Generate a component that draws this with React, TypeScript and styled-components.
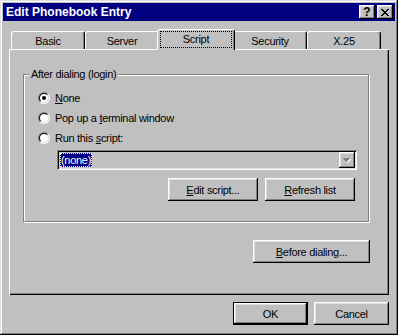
import React from 'react';
import styled, { createGlobalStyle, css } from 'styled-components';

const Global = createGlobalStyle`
  html, body { margin: 0; padding: 0; background: #c0c0c0; }
  body { font-family: "Liberation Sans", Arial, sans-serif; font-size: 11px; letter-spacing: -0.3px; color: #000; }
  * { box-sizing: border-box; }
`;

const raised = css`
  box-shadow: inset -1px -1px #000, inset 1px 1px #fff, inset -2px -2px #808080, inset 2px 2px #dfdfdf;
`;

const Window = styled.div`
  width: 398px;
  height: 335px;
  padding: 3px;
  background: #c0c0c0;
  box-shadow: inset -1px -1px #000, inset 1px 1px #dfdfdf, inset -2px -2px #808080, inset 2px 2px #fff;
  display: flex;
  flex-direction: column;
`;

const TitleBar = styled.div`
  height: 18px;
  background: #000080;
  display: flex;
  align-items: center;
  padding: 0 2px 0 3px;
`;

const Title = styled.div`
  flex: 1;
  color: #fff;
  font-weight: bold;
  font-size: 12px;
  letter-spacing: 0;
`;

const TitleButton = styled.div`
  width: 16px;
  height: 14px;
  background: #c0c0c0;
  ${raised};
  display: flex;
  align-items: center;
  justify-content: center;
  font-weight: bold;
  font-size: 12px;
  letter-spacing: 0;
  line-height: 1;
  & + & { margin-left: 2px; }
`;

const Body = styled.div`
  flex: 1;
  display: flex;
  flex-direction: column;
  padding: 8px 6px 0;
`;

const TabStrip = styled.div`
  display: flex;
  height: 20px;
  padding-left: 2px;
  position: relative;
  z-index: 1;
`;

const Tab = styled.div<{ $active?: boolean }>`
  position: relative;
  width: ${p => (p.$active ? 78 : 74)}px;
  height: ${p => (p.$active ? 21 : 18)}px;
  margin: ${p => (p.$active ? '0 -2px' : '2px 0 0')};
  z-index: ${p => (p.$active ? 2 : 1)};
  background: #c0c0c0;
  border-top: 1px solid #fff;
  border-left: 1px solid #fff;
  border-right: 1px solid #000;
  border-radius: 3px 3px 0 0;
  box-shadow: inset -1px 0 #808080;
  display: flex;
  padding: ${p => (p.$active ? '1px 2px 2px 2px' : '0 2px')};
  align-items: stretch;
`;

const TabLabel = styled.div<{ $focus?: boolean }>`
  flex: 1;
  display: flex;
  align-items: center;
  justify-content: center;
  padding-bottom: ${p => (p.$focus ? 1 : 0)}px;
  outline: ${p => (p.$focus ? '1px dotted #000' : 'none')};
  outline-offset: -1px;
`;

const Panel = styled.div`
  height: 246px;
  box-shadow: inset 1px 1px #fff, inset -1px -1px #000, inset -2px -2px #808080;
  padding: 25px 0 0 14px;
  display: flex;
  flex-direction: column;
  align-items: flex-start;
`;

const GroupFrame = styled.section`
  width: 346px;
  height: 148px;
  border: 1px solid #808080;
  box-shadow: inset 1px 1px #fff, 1px 1px #fff;
  display: flex;
  flex-direction: column;
  align-items: flex-start;
`;

const GroupTitle = styled.div`
  margin: -7px 0 0 5px;
  padding: 0 2px;
  line-height: 13px;
  background: #c0c0c0;
`;

const Options = styled.div`
  margin: 7px 0 0 14px;
  display: flex;
  flex-direction: column;
`;

const RadioRow = styled.div`
  height: 20px;
  display: flex;
  align-items: center;
`;

const RadioCircle = styled.div<{ $checked?: boolean }>`
  position: relative;
  width: 12px;
  height: 12px;
  border-radius: 50%;
  border: 1px solid;
  border-color: #808080 #fff #fff #808080;
  flex: none;
  &::before {
    content: '';
    position: absolute;
    inset: 0;
    border-radius: 50%;
    border: 1px solid;
    border-color: #000 #dfdfdf #dfdfdf #000;
    background: #fff;
  }
  &::after {
    content: '';
    display: ${p => (p.$checked ? 'block' : 'none')};
    position: absolute;
    left: 3px;
    top: 3px;
    width: 4px;
    height: 4px;
    border-radius: 50%;
    background: #000;
  }
`;

const RadioLabel = styled.span`
  margin-left: 5px;
`;

const ScriptPicker = styled.div`
  margin: 2px 0 0 33px;
  width: 300px;
  display: flex;
  flex-direction: column;
`;

const Combo = styled.div`
  height: 20px;
  padding: 2px;
  box-shadow: inset 1px 1px #808080, inset -1px -1px #fff, inset 2px 2px #000, inset -2px -2px #dfdfdf;
  display: flex;
  align-items: stretch;
`;

const ComboValue = styled.div`
  flex: 1;
  display: flex;
  align-items: center;
  padding-left: 1px;
`;

const Selected = styled.span`
  background: #000080;
  color: #fff;
  padding: 0 1px;
  height: 14px;
  line-height: 14px;
  outline: 1px dotted #ffff80;
  outline-offset: -1px;
`;

const DropButton = styled.div`
  width: 16px;
  background: #c0c0c0;
  ${raised};
  display: flex;
  align-items: center;
  justify-content: center;
`;

const ButtonRow = styled.div<{ $mt: number; $pr?: number; $w?: number }>`
  display: flex;
  justify-content: flex-end;
  gap: 7px;
  align-self: stretch;
  margin-top: ${p => p.$mt}px;
  padding-right: ${p => p.$pr ?? 0}px;
`;

const Button = styled.div<{ $w: number; $default?: boolean }>`
  width: ${p => p.$w}px;
  height: 23px;
  background: #c0c0c0;
  display: flex;
  align-items: center;
  justify-content: center;
  ${p =>
    p.$default
      ? css`box-shadow: inset 0 0 0 1px #000, inset -2px -2px #000, inset 2px 2px #fff, inset -3px -3px #808080, inset 3px 3px #dfdfdf;`
      : raised}
`;

const Footer = styled.div`
  display: flex;
  justify-content: flex-end;
  gap: 6px;
  margin-top: 7px;
`;

const CloseIcon = () => (
  <svg width="8" height="7" viewBox="0 0 8 7" shapeRendering="crispEdges">
    <path d="M0 0h2v1h-2zM6 0h2v1h-2zM1 1h2v1h-2zM5 1h2v1h-2zM2 2h4v1h-4zM3 3h2v1h-2zM2 4h4v1h-4zM1 5h2v1h-2zM5 5h2v1h-2zM0 6h2v1h-2zM6 6h2v1h-2z" fill="#000" />
  </svg>
);

const DisabledArrow = () => (
  <svg width="8" height="5" viewBox="0 0 8 5" shapeRendering="crispEdges">
    <path d="M1 1h7v1h-7zM2 2h5v1h-5zM3 3h3v1h-3zM4 4h1v1h-1z" fill="#fff" />
    <path d="M0 0h7v1h-7zM1 1h5v1h-5zM2 2h3v1h-3zM3 3h1v1h-1z" fill="#808080" />
  </svg>
);

export default function App() {
  return (
    <>
      <Global />
      <Window>
        <TitleBar>
          <Title>Edit Phonebook Entry</Title>
          <TitleButton>?</TitleButton>
          <TitleButton><CloseIcon /></TitleButton>
        </TitleBar>
        <Body>
          <TabStrip>
            <Tab><TabLabel>Basic</TabLabel></Tab>
            <Tab><TabLabel>Server</TabLabel></Tab>
            <Tab $active><TabLabel $focus>Script</TabLabel></Tab>
            <Tab><TabLabel>Security</TabLabel></Tab>
            <Tab><TabLabel>X.25</TabLabel></Tab>
          </TabStrip>
          <Panel>
            <GroupFrame>
              <GroupTitle>After dialing (login)</GroupTitle>
              <Options>
                <RadioRow><RadioCircle $checked /><RadioLabel><u>N</u>one</RadioLabel></RadioRow>
                <RadioRow><RadioCircle /><RadioLabel>Pop up a <u>t</u>erminal window</RadioLabel></RadioRow>
                <RadioRow><RadioCircle /><RadioLabel>Run this <u>s</u>cript:</RadioLabel></RadioRow>
              </Options>
              <ScriptPicker>
                <Combo>
                  <ComboValue><Selected>(none)</Selected></ComboValue>
                  <DropButton><DisabledArrow /></DropButton>
                </Combo>
                <ButtonRow $mt={8} $pr={2}>
                  <Button $w={90}><u>E</u>dit script...</Button>
                  <Button $w={90}><u>R</u>efresh list</Button>
                </ButtonRow>
              </ScriptPicker>
            </GroupFrame>
            <ButtonRow $mt={18} $pr={19}>
              <Button $w={117}><u>B</u>efore dialing...</Button>
            </ButtonRow>
          </Panel>
          <Footer>
            <Button $w={75} $default>OK</Button>
            <Button $w={75}>Cancel</Button>
          </Footer>
        </Body>
      </Window>
    </>
  );
}
